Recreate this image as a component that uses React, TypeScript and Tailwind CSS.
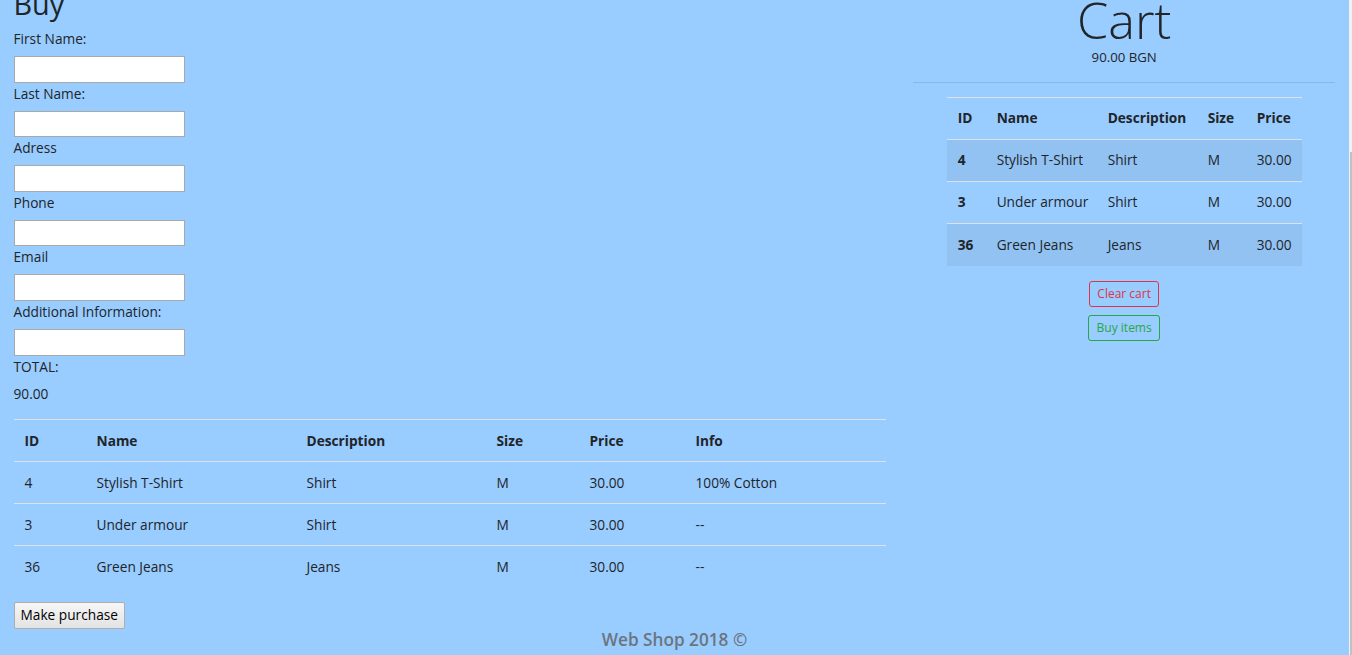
import React from 'react';

const font = { fontFamily: '"Segoe UI", "Open Sans", "Noto Sans", sans-serif' };

const fields = ['First Name:', 'Last Name:', 'Adress', 'Phone', 'Email', 'Additional Information:'];

const items = [
  { id: 4, name: 'Stylish T-Shirt', description: 'Shirt', size: 'M', price: '30.00', info: '100% Cotton' },
  { id: 3, name: 'Under armour', description: 'Shirt', size: 'M', price: '30.00', info: '--' },
  { id: 36, name: 'Green Jeans', description: 'Jeans', size: 'M', price: '30.00', info: '--' },
];

const BuyForm: React.FC = () => (
  <div className="w-[899.3px] shrink-0 px-[13.5px]">
    <h2 className="h-[34.56px] pt-[1px] leading-[33.56px] text-[28.8px] font-medium mb-[8px]">Buy</h2>
    {fields.map((f) => (
      <div key={f}>
        <label className="block h-[21.6px] leading-[21.6px] mb-[6.4px]">{f}</label>
        <input type="text" className="block w-[171px] h-[26.6px] bg-white border border-[#a9a9a9] outline-none" />
      </div>
    ))}
    <label className="block h-[21.6px] leading-[21.6px] mb-[6.2px]">TOTAL:</label>
    <p className="h-[21.6px] leading-[21.6px] mb-[14.4px]">90.00</p>

    <table className="w-full table-fixed border-collapse mb-[14px]">
      <colgroup>
        <col className="w-[72px]" />
        <col className="w-[210px]" />
        <col className="w-[190px]" />
        <col className="w-[93px]" />
        <col className="w-[106px]" />
        <col />
      </colgroup>
      <thead>
        <tr className="h-[42px] border-t border-[#dee2e6] text-left font-bold">
          <th className="px-[11px]">ID</th>
          <th className="px-[11px]">Name</th>
          <th className="px-[11px]">Description</th>
          <th className="px-[11px]">Size</th>
          <th className="px-[11px]">Price</th>
          <th className="px-[11px]">Info</th>
        </tr>
      </thead>
      <tbody>
        {items.map((it) => (
          <tr key={it.id} className="h-[42px] border-t border-[#dee2e6]">
            <td className="px-[11px]">{it.id}</td>
            <td className="px-[11px]">{it.name}</td>
            <td className="px-[11px]">{it.description}</td>
            <td className="px-[11px]">{it.size}</td>
            <td className="px-[11px]">{it.price}</td>
            <td className="px-[11px]">{it.info}</td>
          </tr>
        ))}
      </tbody>
    </table>

    <button className="h-[27px] px-[6px] border border-[#adadad] bg-linear-to-b from-[#f6f6f6] to-[#e3e3e3] text-[13.7px] leading-[20px] text-black rounded-[2px]">
      Make purchase
    </button>
  </div>
);

const Cart: React.FC = () => (
  <div className="w-[449.7px] shrink-0 px-[13.5px] pt-[1px] flex flex-col items-center">
    <h1 className="h-[60.5px] pt-[8px] leading-[50px] text-[50.4px] font-light">Cart</h1>
    <div className="h-[21.6px] leading-[21.6px] text-[13.2px] mb-[13px]">90.00 BGN</div>
    <hr className="w-full border-0 border-t border-[#8ab8e6] mb-[14.4px]" />
    <table className="table-fixed border-collapse w-[355px] mb-[15px]">
      <colgroup>
        <col className="w-[39px]" />
        <col className="w-[111px]" />
        <col className="w-[100px]" />
        <col className="w-[49px]" />
        <col className="w-[56px]" />
      </colgroup>
      <thead>
        <tr className="h-[42px] border-t border-[#dee2e6] text-left font-bold">
          <th className="px-[11px]">ID</th>
          <th className="px-[11px]">Name</th>
          <th className="px-[11px]">Description</th>
          <th className="px-[11px]">Size</th>
          <th className="px-[11px]">Price</th>
        </tr>
      </thead>
      <tbody>
        {items.map((it, i) => (
          <tr key={it.id} className={`h-[42px] border-t border-[#dee2e6] ${i % 2 === 0 ? 'bg-[#91c2f2]' : ''}`}>
            <td className="px-[11px] font-bold">{it.id}</td>
            <td className="px-[11px] whitespace-nowrap">{it.name}</td>
            <td className="px-[11px]">{it.description}</td>
            <td className="px-[11px]">{it.size}</td>
            <td className="px-[11px]">{it.price}</td>
          </tr>
        ))}
      </tbody>
    </table>
    <button className="h-[26.5px] px-[7.2px] border border-[#dc3545] text-[#dc3545] rounded-[3px] text-[12px] leading-[18px] mb-[7.5px]">
      Clear cart
    </button>
    <button className="h-[26.5px] px-[7.2px] border border-[#28a745] text-[#28a745] rounded-[3px] text-[12px] leading-[18px]">
      Buy items
    </button>
  </div>
);

export default function App() {
  return (
    <div className="flex w-[1352px] h-[655px] overflow-hidden bg-[#99ccff] text-[#212529] text-[13.7px]" style={font}>
      <div className="w-[1349px] shrink-0">
        <div className="flex -mt-[14.4px]">
          <BuyForm />
          <Cart />
        </div>
        <footer className="text-center text-[17.2px] leading-[21.6px] font-semibold text-[#6c757d]">Web Shop 2018 ©</footer>
      </div>
      <div className="w-[3px] shrink-0 bg-[#f1f1f1] flex flex-col">
        <div className="h-[152px]" />
        <div className="flex-1 ml-[1px] bg-[#c1c1c1]" />
      </div>
    </div>
  );
}
